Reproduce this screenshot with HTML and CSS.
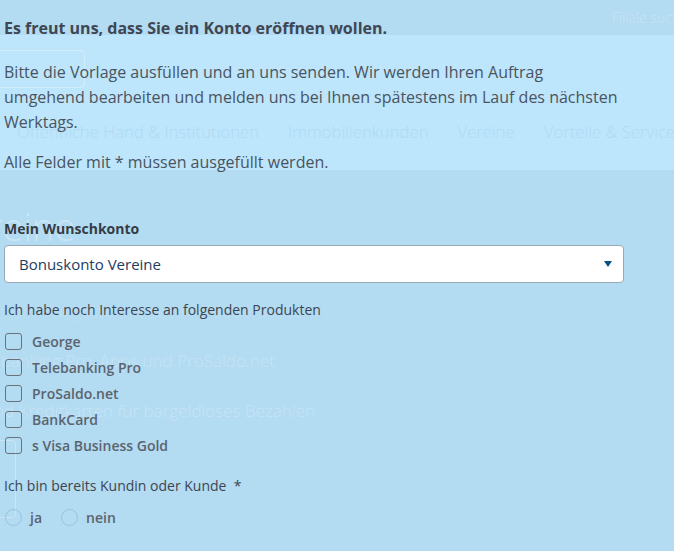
FILE: index.html
```html
<!DOCTYPE html>
<html lang="de">
<head>
  <meta charset="UTF-8">
  <meta name="viewport" content="width=device-width, initial-scale=1.0">
  <title>Konto eröffnen</title>
  <link rel="stylesheet" href="styles.css">
</head>

<body>

  <!-- page behind the overlay, washed out -->
  <div class="backdrop" aria-hidden="true">
    <span class="bd-branch">Filiale suchen</span>
    <div class="bd-band">
      <span class="bd-button"></span>
      <nav class="bd-nav">
        <span>Öffentliche Hand &amp; Institutionen</span>
        <span>Immobilienkunden</span>
        <span>Vereine</span>
        <span>Vorteile &amp; Service</span>
      </nav>
    </div>
    <span class="bd-title">Vereine</span>
    <span class="bd-line bd-line-1">Abwickeln – abgestimmt auf Ihre Bedürfnisse</span>
    <span class="bd-line bd-line-2">Telebanking Pro, Apps und ProSaldo.net</span>
    <span class="bd-line bd-line-3">BankCard und Kreditkarten für bargeldloses Bezahlen</span>
    <span class="bd-box"></span>
  </div>

  <form class="form">
    <h1>Es freut uns, dass Sie ein Konto eröffnen wollen.</h1>
    <p>Bitte die Vorlage ausfüllen und an uns senden. Wir werden Ihren Auftrag umgehend bearbeiten und melden uns bei Ihnen spätestens im Lauf des nächsten Werktags.</p>
    <p>Alle Felder mit * müssen ausgefüllt werden.</p>

    <label class="field-label" for="konto">Mein Wunschkonto</label>
    <div class="select">
      <span id="konto">Bonuskonto Vereine</span>
      <svg width="8" height="6" viewBox="0 0 8 6"><path d="M0 0h8L4 6z" fill="#0b4f80"/></svg>
    </div>

    <div class="group-label">Ich habe noch Interesse an folgenden Produkten</div>
    <div class="checks">
      <label class="check"><span class="box"></span>George</label>
      <label class="check"><span class="box"></span>Telebanking Pro</label>
      <label class="check"><span class="box"></span>ProSaldo.net</label>
      <label class="check"><span class="box"></span>BankCard</label>
      <label class="check"><span class="box"></span>s Visa Business Gold</label>
    </div>

    <div class="group-label">Ich bin bereits Kundin oder Kunde &nbsp;*</div>
    <div class="radios">
      <label class="radio"><span class="dot"></span>ja</label>
      <label class="radio"><span class="dot"></span>nein</label>
    </div>
  </form>

</body>
</html>
```

FILE: styles.css
```css
* {
  margin: 0;
  padding: 0;
  box-sizing: border-box;
}

body {
  width: 674px;
  height: 551px;
  overflow: hidden;
  position: relative;
  background: #b3dbf2;
  font-family: 'Open Sans', sans-serif;
  color: #46505b;
}

/* washed out page behind */
.backdrop {
  position: absolute;
  inset: 0;
  color: rgba(255, 255, 255, 0.28);
  font-weight: 300;
}

.bd-branch {
  position: absolute;
  left: 612px;
  top: 8px;
  font-size: 14px;
  white-space: nowrap;
}

.bd-band {
  position: absolute;
  left: 0;
  right: 0;
  top: 35px;
  height: 135px;
  background: #bde5fb;
}

.bd-button {
  position: absolute;
  left: -20px;
  top: 15px;
  width: 105px;
  height: 38px;
  border: 1px solid rgba(255, 255, 255, 0.3);
  border-radius: 4px;
}

.bd-nav {
  position: absolute;
  left: 17px;
  top: 85px;
  display: flex;
  gap: 29px;
  white-space: nowrap;
  font-size: 16.7px;
  color: rgba(160, 205, 235, 0.5);
}

.bd-title {
  position: absolute;
  left: -55px;
  top: 200px;
  font-size: 38px;
  white-space: nowrap;
  color: rgba(255, 255, 255, 0.32);
}

.bd-line {
  position: absolute;
  font-size: 17px;
  white-space: nowrap;
}

.bd-line-1 { left: -40px; top: 300px; color: rgba(255, 255, 255, 0.12); }
.bd-line-2 { right: 399px; top: 349px; }
.bd-line-3 { right: 359px; top: 399px; }

.bd-box {
  position: absolute;
  left: -40px;
  top: 440px;
  width: 56px;
  height: 78px;
  border: 1px solid rgba(255, 255, 255, 0.3);
  border-radius: 4px;
}

/* the form */
.form {
  position: relative;
  padding: 16px 0 0 4px;
  width: 624px;
}

.form h1 {
  font-size: 16px;
  font-weight: 700;
  line-height: 24px;
  color: #3e4752;
  margin-bottom: 20px;
}

.form p {
  font-size: 16px;
  line-height: 24.8px;
  color: #4a545f;
  margin-bottom: 16px;
}

.field-label {
  display: block;
  margin-top: 44px;
  font-size: 14px;
  font-weight: 700;
  line-height: 20px;
  color: #353c44;
}

.select {
  margin-top: 6px;
  height: 38px;
  background: #fff;
  border: 1px solid #9aa8b6;
  border-radius: 4px;
  display: flex;
  align-items: center;
  justify-content: space-between;
  padding: 0 11px 0 14px;
  font-size: 15px;
  color: #1c3d62;
}

.group-label {
  margin-top: 17px;
  font-size: 14px;
  line-height: 20px;
  color: #3d4650;
}

.checks {
  margin-top: 8px;
  display: flex;
  flex-direction: column;
}

.check,
.radio {
  display: flex;
  align-items: center;
  height: 26px;
  font-size: 14px;
  font-weight: 600;
  color: #5a646f;
}

.box {
  width: 17px;
  height: 17px;
  margin: 0 10px 0 1px;
  border: 1.5px solid #68727d;
  border-radius: 3px;
}

.checks + .group-label {
  margin-top: 18px;
}

.radios {
  margin-top: 8px;
  display: flex;
  gap: 19px;
}

.dot {
  width: 17px;
  height: 17px;
  margin-right: 8px;
  border: 1px solid #98c3dc;
  border-radius: 50%;
}

.radio:first-child .dot {
  margin-left: 1px;
}
```
